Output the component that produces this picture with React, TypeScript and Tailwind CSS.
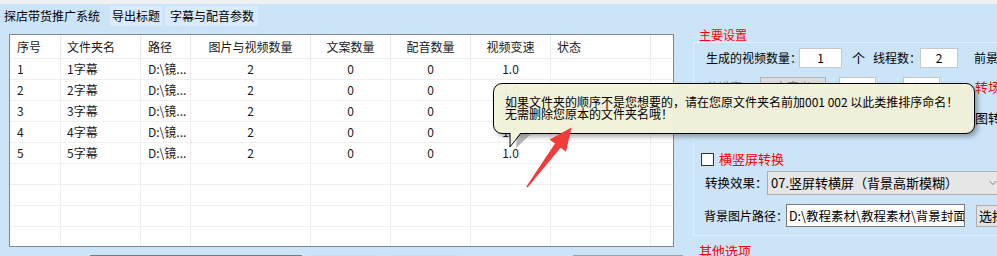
import { ChevronDown } from 'lucide-react'

const cols = [
    { w: 'w-[51px]', align: 'text-left pl-[7px]' },
    { w: 'w-[80px]', align: 'text-left pl-[6px]' },
    { w: 'w-[50px]', align: 'text-left pl-[7px]' },
    { w: 'w-[120px]', align: 'text-center' },
    { w: 'w-[80px]', align: 'text-center' },
    { w: 'w-[80px]', align: 'text-center' },
    { w: 'w-[80px]', align: 'text-center' },
    { w: 'w-[100px]', align: 'text-left pl-[6px]' },
    { w: 'flex-1', align: 'text-left' },
]

const headers = ['序号', '文件夹名', '路径', '图片与视频数量', '文案数量', '配音数量', '视频变速', '状态', '']

const rows: string[][] = [
    ...[1, 2, 3, 4, 5].map((i) => [String(i), `${i}字幕`, 'D:\\镜...', '2', '0', '0', '1.0', '', '']),
    ...Array.from({ length: 4 }, () => ['', '', '', '', '', '', '', '', '']),
]

const FileTable = () => {
    return (
        <div className="ml-[9px] mt-[6px] w-[665px] h-[213px] overflow-hidden border border-[#828790] bg-white text-[#1a1a1a]">
            <div className="flex h-[24px] border-b border-[#efefef]">
                {headers.map((h, i) => (
                    <div
                        key={i}
                        className={`${cols[i].w} ${cols[i].align} shrink-0 leading-[24px] whitespace-nowrap border-r border-[#e8e8e8] last:border-r-0`}
                    >
                        {h}
                    </div>
                ))}
            </div>
            {rows.map((r, ri) => (
                <div key={ri} className="flex h-[21px] border-b border-[#efefef]">
                    {r.map((c, ci) => (
                        <div
                            key={ci}
                            className={`${cols[ci].w} ${cols[ci].align} shrink-0 leading-[20px] whitespace-nowrap border-r border-[#efefef] last:border-r-0`}
                        >
                            {c}
                        </div>
                    ))}
                </div>
            ))}
        </div>
    )
}

const RightPanel = () => {
    return (
        <div className="flex-1 text-black whitespace-nowrap">
            <div className="ml-[13px] h-[14px] leading-[14px] text-[#ff0000]">主要设置</div>
            {/* main settings group */}
            <div className="ml-[7px] h-[96px] border-l border-t border-[#e2effb] pl-[12px] pt-[5px]">
                <div className="flex items-center h-[20px]">
                    <span className="w-[93px] shrink-0">生成的视频数量：</span>
                    <div className="w-[43px] h-[20px] shrink-0 bg-white border border-[#c8c8c8] text-center leading-[18px]">1</div>
                    <span className="ml-[10px] w-[12px] shrink-0 text-[13px]">个</span>
                    <span className="ml-[9px] w-[47px] shrink-0">线程数：</span>
                    <div className="w-[38px] h-[20px] shrink-0 bg-white border border-[#c8c8c8] text-center leading-[18px]">2</div>
                    <span className="ml-[16px] shrink-0">前景</span>
                </div>
                <div className="flex items-center h-[20px] mt-[9px]">
                    <span className="w-[54px] shrink-0 text-[#888]">分辨率：</span>
                    <div className="w-[66px] h-[20px] shrink-0 bg-[#dcdcdc] border border-[#b4b4b4] text-center leading-[18px] text-[#888]">
                        自定义
                    </div>
                    <div className="ml-[13px] w-[37px] h-[20px] shrink-0 bg-white border border-[#c8c8c8] text-center leading-[18px] text-[#888]">
                        1150
                    </div>
                    <span className="ml-[9px] w-[18px] shrink-0 text-[#888]">×</span>
                    <div className="w-[37px] h-[20px] shrink-0 bg-white border border-[#c8c8c8] text-center leading-[18px] text-[#888]">
                        720
                    </div>
                    <span className="ml-[35px] shrink-0 text-[13px] text-[#ff0000]">转场</span>
                </div>
                <div className="flex items-center h-[20px] mt-[11px]">
                    <span className="w-[212px] shrink-0 text-[#999]">图片与视频转场效果 (随机)</span>
                    <span className="ml-[2px] w-[20px] shrink-0 text-[#999]">之</span>
                    <span className="ml-[35px] shrink-0 text-[13px]">图转</span>
                </div>
            </div>
            {/* orientation group */}
            <div className="ml-[7px] mt-[5px] h-[93px] border-l border-b border-[#e2effb] pl-[7px] pt-[9px]">
                <div className="flex items-center h-[14px]">
                    <div className="w-[13px] h-[13px] shrink-0 bg-white border border-[#333]" />
                    <span className="ml-[5px] text-[#ff0000] text-[13px] leading-[14px]">横竖屏转换</span>
                </div>
                <div className="flex items-center h-[24px] mt-[5px]">
                    <span className="ml-[4px] w-[62px] shrink-0 text-[12.5px]">转换效果：</span>
                    <div className="flex items-center w-[240px] h-[24px] bg-[#e6e6e6] border border-[#acacac] pl-[3px] text-[13px] shrink-0">
                        <span className="flex-1">07.竖屏转横屏（背景高斯模糊）</span>
                        <ChevronDown size={12} strokeWidth={1.5} className="mr-[7px] text-[#555]" />
                    </div>
                </div>
                <div className="flex items-center h-[23px] mt-[9px]">
                    <span className="ml-[3px] w-[82px] shrink-0 text-[12px]">背景图片路径：</span>
                    <div className="w-[179px] h-[23px] bg-white border border-[#7a7a7a] pl-[2px] leading-[21px] text-[12.5px] overflow-hidden shrink-0">
                        D:\教程素材\教程素材\背景封面
                    </div>
                    <div className="ml-[11px] w-[40px] h-[22px] bg-[#e1e1e1] border border-[#adadad] pl-[2px] leading-[20px] text-[13px] shrink-0">
                        选择
                    </div>
                </div>
            </div>
            <div className="ml-[13px] mt-[8px] text-[13px] leading-[14px] text-[#ff0000]">其他选项</div>
        </div>
    )
}

export default function App() {
    return (
        <div
            className="relative w-[997px] h-[256px] overflow-hidden bg-[#cce4f7] text-[12px]"
            style={{ fontFamily: '"Noto Sans CJK SC", "Noto Sans", sans-serif' }}
        >
            <div className="h-[4px] bg-[#f0f0f0]" />
            <div className="flex items-center h-[24px] text-black text-[12px] whitespace-nowrap">
                <div className="pl-[4px] w-[108px] h-[24px] shrink-0 leading-[23px]">探店带货推广系统</div>
                <div className="ml-[2px] pl-[2px] w-[52px] h-[20px] shrink-0 leading-[20px] bg-[#d9eafa]">导出标题</div>
                <div className="ml-[3px] pl-[5px] w-[93px] h-[20px] shrink-0 leading-[20px] bg-[#d9eafa]">字幕与配音参数</div>
            </div>
            <div className="flex">
                <div className="w-[686px] shrink-0">
                    <FileTable />
                    <div className="flex mt-[8px] h-[10px]">
                        <div className="ml-[90px] w-[212px] border border-[#7a7a7a] bg-white" />
                        <div className="ml-[10px] w-[68px] border border-[#c9ddee] bg-[#dbeaf7]" />
                        <div className="ml-[8px] w-[72px] border border-[#c9ddee] bg-[#dbeaf7]" />
                        <div className="ml-[113px] w-[110px] border border-[#9aa3ab] bg-[#d6e6f4]" />
                    </div>
                </div>
                <RightPanel />
            </div>

            {/* tooltip over the table */}
            <div className="absolute left-[493px] top-[83px] w-[482px] h-[51px]">
                <div className="absolute left-[3px] top-[3px] w-[482px] h-[51px] rounded-[9px] bg-black/30 blur-[2px]" />
                <div className="absolute inset-0 rounded-[9px] border border-black bg-[#f5f4dc]/95 pl-[11px] pt-[12px] text-[12px] leading-[12px] text-black whitespace-nowrap">
                    <div>如果文件夹的顺序不是您想要的，请在您原文件夹名前加001 002 以此类推排序命名！</div>
                    <div>无需删除您原本的文件夹名哦！</div>
                </div>
                <svg className="absolute left-[16px] top-[49px]" width="24" height="18" viewBox="0 0 24 18">
                    <polygon points="5,1 19,1 4,15" fill="#7a7a7a" opacity="0.55" transform="translate(3,1)" />
                    <polygon points="1,0 12,0 1,15" fill="#f5f4dc" />
                    <polyline points="1,1 1,15 12,1" fill="none" stroke="black" strokeWidth="1" />
                </svg>
            </div>

            {/* red arrow */}
            <svg className="absolute left-0 top-0 pointer-events-none" width="997" height="256">
                <polygon
                    points="526.4,186.6 555,143.5 549.6,139.6 571.5,127.5 566,151.8 560.6,147.7 527.6,187.4"
                    fill="#f23b3b"
                />
            </svg>
        </div>
    )
}
